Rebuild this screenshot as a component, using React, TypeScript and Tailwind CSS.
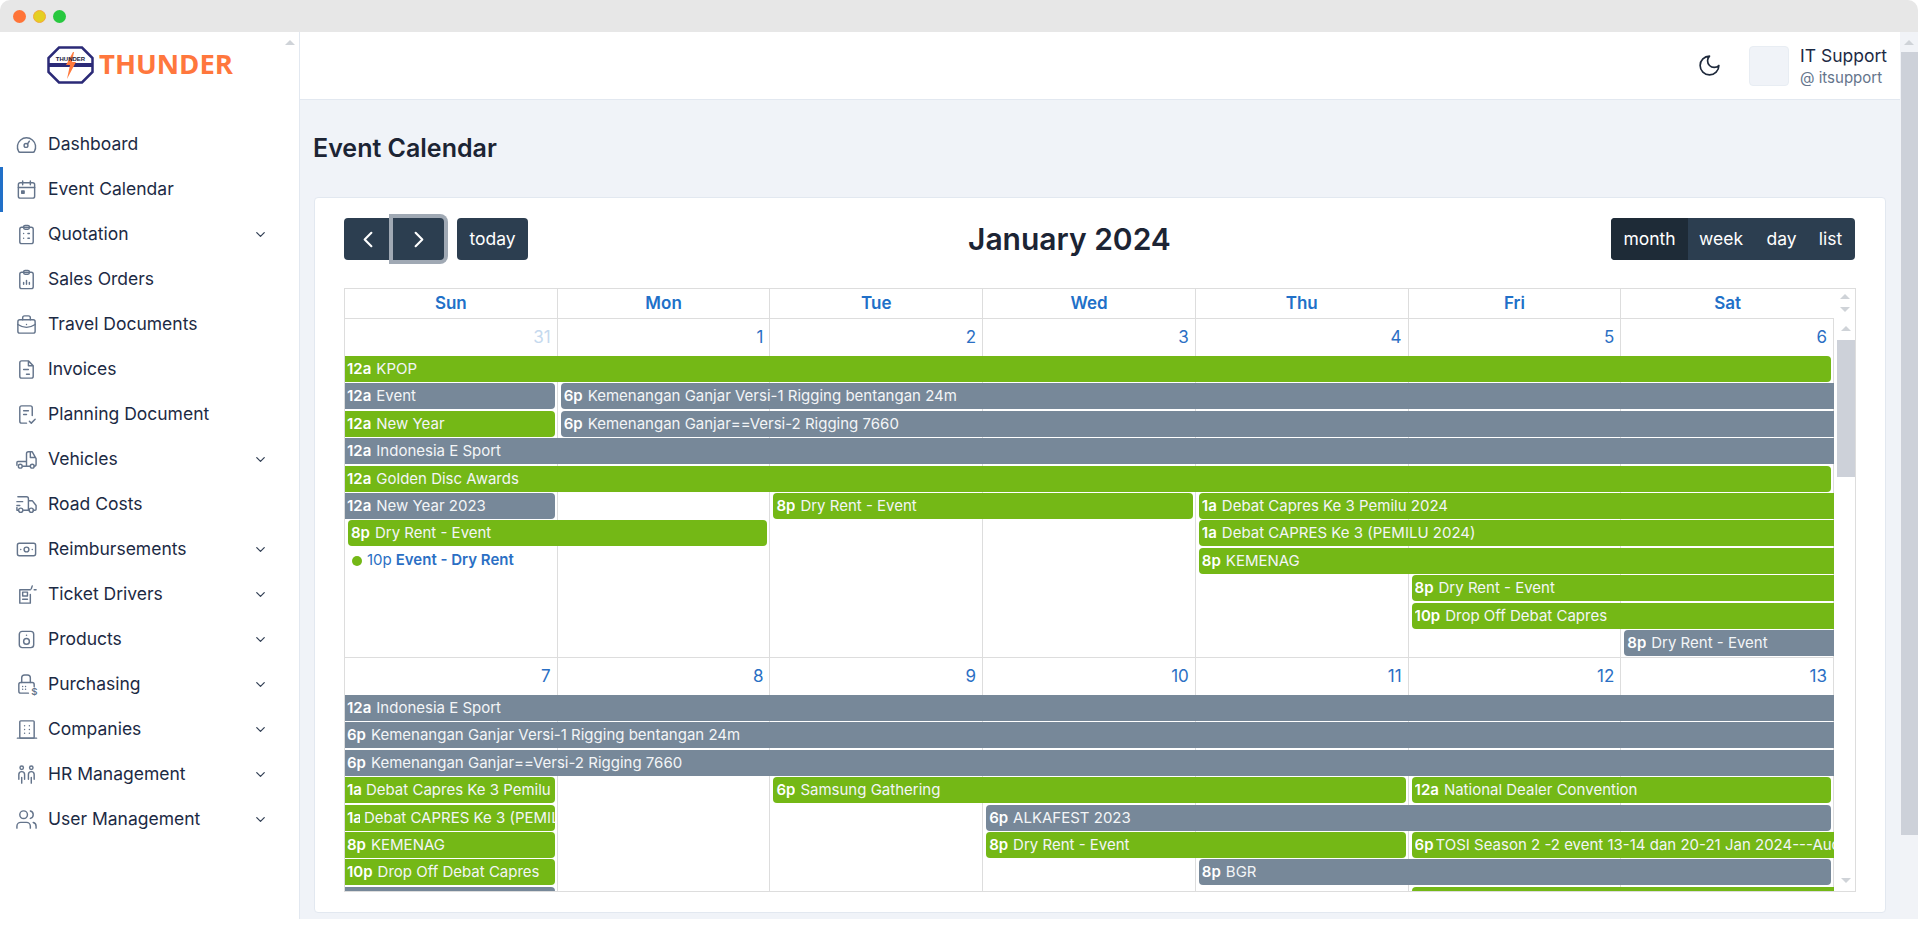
import React from "react";

const S = ({ children }: { children: React.ReactNode }) => (
  <svg viewBox="0 0 24 24" fill="none" stroke="currentColor" strokeWidth="1.5" strokeLinecap="round" strokeLinejoin="round" className="w-[23px] h-[23px] text-[#64748b] shrink-0">
    {children}
  </svg>
);

const icons: Record<string, React.ReactNode> = {
  dashboard: (<><path d="M5 20h14a1.5 1.5 0 0 0 1.2-.7A9.5 9.5 0 1 0 3.8 19.3 1.5 1.5 0 0 0 5 20z" /><circle cx="11.5" cy="13" r="2" /><path d="M13 11.5l2-3" /></>),
  calendar: (<><rect x="3.5" y="5" width="17" height="16" rx="2" /><path d="M3.5 10h17M8 3v4M16 3v4" /><rect x="7" y="13.5" width="2.5" height="2.5" fill="currentColor" /></>),
  quotation: (<><rect x="5" y="4.5" width="14" height="17" rx="2" /><rect x="9" y="2.5" width="6" height="4" rx="1.5" /><path d="M9 11h.01M9 16h.01M13.5 11h1.5M13.5 16h1.5" /></>),
  sales: (<><rect x="5" y="4.5" width="14" height="17" rx="2" /><rect x="9" y="2.5" width="6" height="4" rx="1.5" /><path d="M9 17v-2M12 17v-4M15 17v-2" /></>),
  travel: (<><rect x="3" y="7" width="18" height="14" rx="2" /><path d="M8 7V5a2 2 0 0 1 2-2h4a2 2 0 0 1 2 2v2M3 12c3 2 6 3 9 3s6-1 9-3M12 12h.01" /></>),
  invoice: (<path d="M14 3H7a2 2 0 0 0-2 2v14a2 2 0 0 0 2 2h10a2 2 0 0 0 2-2V8zM14 3v5h5M9 12h5M12 17h3" />),
  planning: (<path d="M18 13V5a2 2 0 0 0-2-2H7a2 2 0 0 0-2 2v14a2 2 0 0 0 2 2h5M9 8h5M9 12h3M15 19l2 2 4-4" />),
  vehicle: (<><path d="M12 19V6a2 2 0 0 1 2-2h4l4 7v6a2 2 0 0 1-2 2M2 18v-3a1 1 0 0 1 1-1h9M8 19h8M16 5v5h5" /><circle cx="5.5" cy="19" r="2" /><circle cx="18" cy="19" r="2" /></>),
  road: (<><path d="M14 18V6a2 2 0 0 0-2-2H3M15 18H9M19 18h2a1 1 0 0 0 1-1v-4l-4-5h-4M2 9h6M2 13h3M2 15v3h1" /><circle cx="6" cy="18" r="2.2" /><circle cx="17" cy="18" r="2.2" /></>),
  reimb: (<><rect x="2.5" y="5.5" width="19" height="13" rx="2" /><circle cx="12" cy="12" r="2.5" /><path d="M6 12h.01M18 12h.01" /></>),
  ticket: (<><path d="M16 7H5v14h11v-9" /><rect x="8" y="9.5" width="5" height="4" /><path d="M8 17h5M18 3l-1 3M22 7h-2" /></>),
  product: (<><rect x="4.5" y="3.5" width="15" height="17" rx="3" /><circle cx="12" cy="14" r="3" /><path d="M12 7.5h.01" /></>),
  purchase: (<><path d="M7 10V5a3 3 0 0 1 3-3h3a3 3 0 0 1 3 3v5" /><path d="M14 21H6a2 2 0 0 1-2-2v-7a2 2 0 0 1 2-2h12a2 2 0 0 1 2 2v2" /><path d="M8 14h.01M11 14h.01M8 17h.01M11 17h.01" /><text x="17" y="23" fontSize="10" fontWeight="600" fill="currentColor" stroke="none" fontFamily="Inter, sans-serif">$</text></>),
  company: (<><rect x="5" y="3" width="15" height="18" rx="1" /><path d="M2.5 21h20M10 8h.01M15 8h.01M10 12h.01M15 12h.01M10 16h.01M15 16h.01" /></>),
  hr: (<><circle cx="7" cy="5" r="1.8" /><circle cx="17" cy="5" r="1.8" /><path d="M4 17v-5a3 3 0 0 1 6 0v5M7 15v6" /><path d="M14 17v-5a3 3 0 0 1 6 0v5M17 15v6" /></>),
  users: (<><path d="M16 21v-2a4 4 0 0 0-4-4H6a4 4 0 0 0-4 4v2" /><circle cx="9" cy="7" r="4" /><path d="M16 3.13a4 4 0 0 1 0 7.75M22 21v-2a4 4 0 0 0-3-3.87" /></>),
};

const nav: [string, string, boolean][] = [
  ["Dashboard", "dashboard", false],
  ["Event Calendar", "calendar", false],
  ["Quotation", "quotation", true],
  ["Sales Orders", "sales", false],
  ["Travel Documents", "travel", false],
  ["Invoices", "invoice", false],
  ["Planning Document", "planning", false],
  ["Vehicles", "vehicle", true],
  ["Road Costs", "road", false],
  ["Reimbursements", "reimb", true],
  ["Ticket Drivers", "ticket", true],
  ["Products", "product", true],
  ["Purchasing", "purchase", true],
  ["Companies", "company", true],
  ["HR Management", "hr", true],
  ["User Management", "users", true],
];

type Ev = { c: number; s: number; r: number; t: string; n: string; g?: boolean; a?: boolean; b?: boolean; m?: string };

const K1 = "Kemenangan Ganjar Versi-1 Rigging bentangan 24m";
const K2 = "Kemenangan Ganjar==Versi-2 Rigging 7660";

const week1: Ev[] = [
  { c: 0, s: 7, r: 0, t: "12a", n: "KPOP", g: true, b: true },
  { c: 0, s: 1, r: 1, t: "12a", n: "Event", b: true },
  { c: 1, s: 6, r: 1, t: "6p", n: K1, a: true },
  { c: 0, s: 1, r: 2, t: "12a", n: "New Year", g: true, b: true },
  { c: 1, s: 6, r: 2, t: "6p", n: K2, a: true },
  { c: 0, s: 7, r: 3, t: "12a", n: "Indonesia E Sport" },
  { c: 0, s: 7, r: 4, t: "12a", n: "Golden Disc Awards", g: true, b: true },
  { c: 0, s: 1, r: 5, t: "12a", n: "New Year 2023", b: true },
  { c: 2, s: 2, r: 5, t: "8p", n: "Dry Rent - Event", g: true, a: true, b: true },
  { c: 4, s: 3, r: 5, t: "1a", n: "Debat Capres Ke 3 Pemilu 2024", g: true, a: true },
  { c: 0, s: 2, r: 6, t: "8p", n: "Dry Rent - Event", g: true, a: true, b: true },
  { c: 4, s: 3, r: 6, t: "1a", n: "Debat CAPRES Ke 3 (PEMILU 2024)", g: true, a: true },
  { c: 4, s: 3, r: 7, t: "8p", n: "KEMENAG", g: true, a: true },
  { c: 5, s: 2, r: 8, t: "8p", n: "Dry Rent - Event", g: true, a: true },
  { c: 5, s: 2, r: 9, t: "10p", n: "Drop Off Debat Capres", g: true, a: true },
  { c: 6, s: 1, r: 10, t: "8p", n: "Dry Rent - Event", a: true },
];

const week2: Ev[] = [
  { c: 0, s: 7, r: 0, t: "12a", n: "Indonesia E Sport" },
  { c: 0, s: 7, r: 1, t: "6p", n: K1 },
  { c: 0, s: 7, r: 2, t: "6p", n: K2 },
  { c: 0, s: 1, r: 3, t: "1a", n: "Debat Capres Ke 3 Pemilu", g: true, b: true, m: "mr-[4px]" },
  { c: 2, s: 3, r: 3, t: "6p", n: "Samsung Gathering", g: true, a: true, b: true },
  { c: 5, s: 2, r: 3, t: "12a", n: "National Dealer Convention", g: true, a: true, b: true },
  { c: 0, s: 1, r: 4, t: "1a", n: "Debat CAPRES Ke 3 (PEMILU", g: true, b: true, m: "w-[13px] mr-[4px]" },
  { c: 3, s: 4, r: 4, t: "6p", n: "ALKAFEST 2023", a: true, b: true },
  { c: 0, s: 1, r: 5, t: "8p", n: "KEMENAG", g: true, b: true },
  { c: 3, s: 2, r: 5, t: "8p", n: "Dry Rent - Event", g: true, a: true, b: true },
  { c: 5, s: 2, r: 5, t: "6p", n: "TOSI Season 2 -2 event 13-14 dan 20-21 Jan 2024---Audio", g: true, a: true, m: "mr-[2px]" },
  { c: 0, s: 1, r: 6, t: "10p", n: "Drop Off Debat Capres", g: true, b: true },
  { c: 4, s: 3, r: 6, t: "8p", n: "BGR", a: true, b: true },
  { c: 0, s: 1, r: 7, t: "", n: "", b: true },
  { c: 5, s: 2, r: 7, t: "", n: "", g: true, a: true },
];

function Bar({ e }: { e: Ev }) {
  return (
    <div
      style={{ gridColumn: `${e.c + 1} / span ${e.s}`, gridRow: e.r + 1 }}
      className={`h-[26px] flex items-center overflow-hidden whitespace-nowrap text-[15px] leading-[26px] text-white ${e.g ? "bg-[#74b816]" : "bg-[#778899]"} ${e.a ? "ml-[3px] pl-[3px] rounded-l-[4px]" : "pl-[2px]"} ${e.b ? "mr-[3px] rounded-r-[4px]" : ""}`}
    >
      <span className={`font-semibold shrink-0 overflow-hidden ${e.m ?? "mr-[5px]"}`}>{e.t}</span>
      <span className="grow shrink min-w-0 overflow-hidden text-[#f3f5f7]">{e.n}</span>
    </div>
  );
}

function Week({ nums, events, dot, muted }: { nums: number[]; events: Ev[]; dot?: boolean; muted?: boolean }) {
  return (
    <div className="relative border-b border-[#ddd] h-[339px] pt-[37px]">
      <div className="absolute inset-0 grid grid-cols-7">
        {nums.map((n, i) => (
          <div key={i} className={`border-r border-[#ddd] text-right pr-[6px] pt-[5px] text-[17px] leading-[26px] ${muted && i === 0 ? "text-[#c5d9ee]" : "text-[#2b6fc4]"}`}>
            {n}
          </div>
        ))}
      </div>
      <div className="relative grid grid-cols-7 auto-rows-[27.4px]">
        {events.map((e, i) => (
          <Bar key={i} e={e} />
        ))}
        {dot && (
          <div style={{ gridColumn: "1", gridRow: 8 }} className="h-[26px] flex items-center pl-[7px] whitespace-nowrap text-[15px] text-[#2b6fc4]">
            <span className="w-[10px] h-[10px] rounded-full bg-[#74b816] mr-[5px]" />
            <span className="mr-[4px]">10p</span>
            <span className="font-semibold">Event - Dry Rent</span>
          </div>
        )}
      </div>
    </div>
  );
}

const Arrow = ({ up, cls }: { up?: boolean; cls?: string }) => (
  <div className={`w-0 h-0 border-x-[5px] border-x-transparent ${up ? "border-b-[5px] border-b-[#cfd3d8]" : "border-t-[5px] border-t-[#cfd3d8]"} ${cls ?? ""}`} />
);

const Logo = () => (
  <div className="flex items-center pl-[47px] h-[66px]">
    <svg viewBox="0 0 47 38" className="w-[47px] h-[38px]">
      <polygon points="12,1.5 35,1.5 45.5,12 45.5,26 35,36.5 12,36.5 1.5,26 1.5,12" fill="#fff" stroke="#2b2a77" strokeWidth="2.5" />
      <rect x="2" y="17" width="43" height="4" fill="#2b2a77" />
      <polygon points="26,6 19,19 23,19 20,33 29,16 25,16 27,6" fill="#ff7a3d" />
      <text x="23.5" y="15" textAnchor="middle" fontSize="6" fontWeight="700" fill="#1a1a3a" fontFamily="Liberation Sans, sans-serif">THUNDER</text>
    </svg>
    <span className="ml-[5px] mb-[2px] text-[#ff773d] text-[27.5px] font-bold leading-none" style={{ fontFamily: "'Open Sans', sans-serif" }}>THUNDER</span>
  </div>
);

export default function App() {
  return (
    <div className="w-[1918px] h-[940px] bg-white flex flex-col overflow-hidden text-[#1c2434]" style={{ fontFamily: "Inter, 'Liberation Sans', sans-serif" }}>
      <div className="h-8 bg-[#e7e7e7] flex items-center gap-[7px] pl-[13px] rounded-t-[10px] shrink-0">
        <span className="w-[13px] h-[13px] rounded-full bg-[#ff7438]" />
        <span className="w-[13px] h-[13px] rounded-full bg-[#e4cf22] border border-[#f5a83c]" />
        <span className="w-[13px] h-[13px] rounded-full bg-[#28c83f]" />
      </div>

      <div className="flex h-[887px] shrink-0">
        <aside className="relative w-[300px] border-r border-[#e2e8f0] bg-white shrink-0">
          <Arrow up cls="absolute right-[4px] top-[8px]" />
          <Logo />
          <nav className="mt-[24px]">
            {nav.map(([label, ic, more]) => (
              <div key={label} className={`flex items-center h-[45px] pr-[31px] ${label === "Event Calendar" ? "border-l-[3px] border-[#2170c8] pl-[12px]" : "pl-[15px]"}`}>
                <S>{icons[ic]}</S>
                <span className="ml-[10px] text-[17.5px] text-[#1c2a44] grow whitespace-nowrap">{label}</span>
                {more && (
                  <svg viewBox="0 0 24 24" fill="none" stroke="#334155" strokeWidth="2" strokeLinecap="round" strokeLinejoin="round" className="w-[15px] h-[15px]">
                    <path d="M6 9l6 6 6-6" />
                  </svg>
                )}
              </div>
            ))}
          </nav>
        </aside>

        <div className="w-[1600px] shrink-0 flex flex-col bg-[#f0f3f8]">
          <header className="h-[68px] bg-white border-b border-[#e2e8f0] flex items-center justify-end pr-[10px] shrink-0">
            <svg viewBox="0 0 24 24" fill="none" stroke="#1e293b" strokeWidth="1.6" strokeLinecap="round" strokeLinejoin="round" className="w-[25px] h-[25px] mr-[27px]">
              <path d="M12 3a6 6 0 0 0 9 9 9 9 0 1 1-9-9z" />
            </svg>
            <div className="w-[40px] h-[40px] rounded-[4px] bg-[#f0f3f8] border border-[#e8edf3] mr-[11px]" />
            <div className="w-[90px] pt-[2px]">
              <div className="text-[17.5px] leading-[22px] text-[#1c2a44] whitespace-nowrap">IT Support</div>
              <div className="text-[15px] leading-[22px] text-[#64748b] whitespace-nowrap">@ itsupport</div>
            </div>
          </header>

          <div className="px-[14px] grow min-h-0">
            <h1 className="h-[97px] flex items-center text-[25px] font-semibold text-[#1c2434] -ml-px">Event Calendar</h1>
            <div className="h-[716px] w-[1572px] bg-white rounded-[4px] border border-[#e2e8f0] pt-[20px] pl-[29px]">
              <div className="relative flex items-center justify-between h-[42px] w-[1511px] text-[17.5px] text-white">
                <div className="flex items-center">
                  <div className="flex">
                    <div className="w-[49px] h-[42px] bg-[#2c3e50] rounded-l-[4px] flex items-center justify-center border-r border-[#4a5a6a]">
                      <svg viewBox="0 0 24 24" fill="none" stroke="#fff" strokeWidth="2.2" strokeLinecap="round" strokeLinejoin="round" className="w-[23px] h-[23px]"><path d="M15 5l-7 7 7 7" /></svg>
                    </div>
                    <div className="w-[51px] h-[42px] bg-[#2c3e50] rounded-r-[4px] flex items-center justify-center ring-4 ring-[#a0a9b4]">
                      <svg viewBox="0 0 24 24" fill="none" stroke="#fff" strokeWidth="2.2" strokeLinecap="round" strokeLinejoin="round" className="w-[23px] h-[23px]"><path d="M9 5l7 7-7 7" /></svg>
                    </div>
                  </div>
                  <div className="ml-[13px] w-[71px] h-[42px] bg-[#2c3e50] rounded-[4px] flex items-center justify-center pt-[1px]">today</div>
                </div>
                <h2 className="absolute left-[624px] text-[30px] font-semibold text-[#1c2434] whitespace-nowrap">January 2024</h2>
                <div className="flex h-[42px] rounded-[4px] overflow-hidden bg-[#2c3e50] items-center">
                  <div className="w-[77px] h-full bg-[#1e2b37] flex items-center justify-center">month</div>
                  <div className="w-[68px] text-center -ml-[1px]">week</div>
                  <div className="w-[53px] text-center">day</div>
                  <div className="w-[47px] text-center pr-[2px]">list</div>
                </div>
              </div>

              <div className="mt-[28px] w-[1512px] h-[604px] border border-[#ddd] flex flex-col overflow-hidden">
                <div className="flex h-[30px] shrink-0">
                  <div className="w-[1489px] grid grid-cols-7 border-b border-[#ddd] shrink-0">
                    {["Sun", "Mon", "Tue", "Wed", "Thu", "Fri", "Sat"].map((d) => (
                      <div key={d} className="border-r border-[#ddd] last:border-r-0 text-center text-[17px] font-semibold text-[#2170c8] leading-[29px]">{d}</div>
                    ))}
                  </div>
                  <div className="flex flex-col items-center grow gap-[8px] pt-[5px] pl-[1px]">
                    <Arrow up />
                    <Arrow />
                  </div>
                </div>
                <div className="flex grow min-h-0">
                  <div className="w-[1489px] shrink-0 overflow-hidden">
                    <Week nums={[31, 1, 2, 3, 4, 5, 6]} events={week1} dot muted />
                    <Week nums={[7, 8, 9, 10, 11, 12, 13]} events={week2} />
                  </div>
                  <div className="grow flex flex-col items-center pl-[3px] pt-[7px] pb-[8px]">
                    <Arrow up />
                    <div className="w-full bg-[#cdd1d9] h-[137px] mt-[9px]" />
                    <div className="grow" />
                    <Arrow />
                  </div>
                </div>
              </div>
            </div>
          </div>
        </div>

        <div className="grow bg-[#f1f3f7] flex flex-col items-center pt-[8px]">
          <Arrow up />
          <div className="w-full bg-[#cdd1d9] h-[783px] mt-[7px] ml-[1px]" />
        </div>
      </div>
    </div>
  );
}
